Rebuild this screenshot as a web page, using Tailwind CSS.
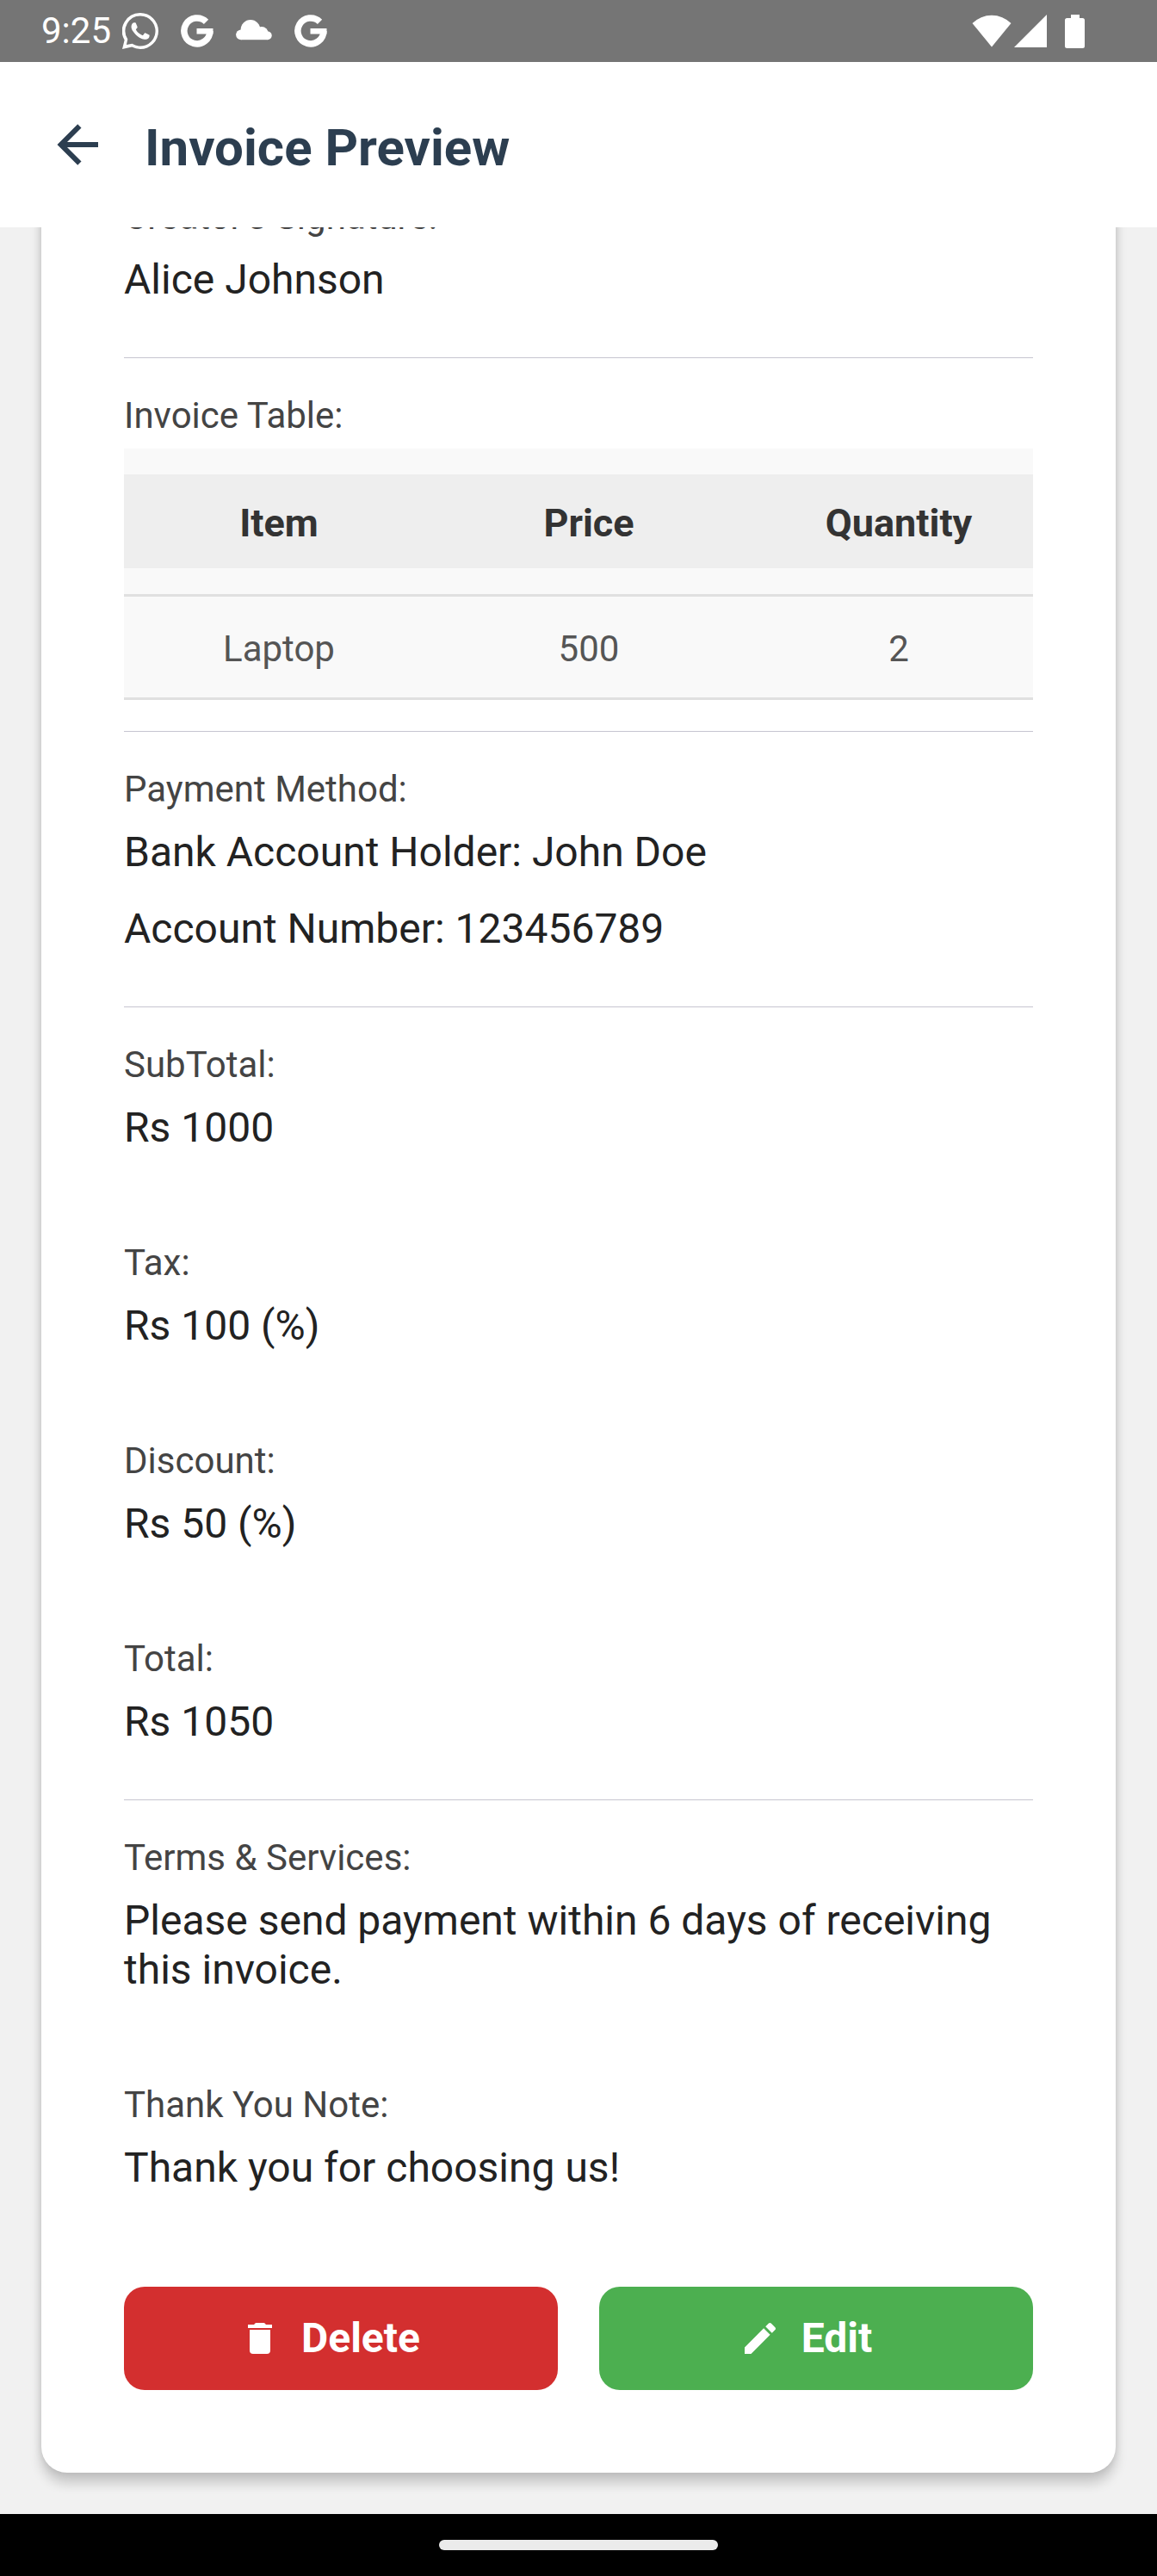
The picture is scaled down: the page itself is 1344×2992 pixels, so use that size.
<!DOCTYPE html>
<html lang="en">
<head>
<meta charset="utf-8">
<title>Invoice Preview</title>
<script src="https://cdn.jsdelivr.net/npm/@tailwindcss/browser@4"></script>
</head>
<body class="font-['Roboto',sans-serif] bg-[#f1f1f1]">
<div class="flex h-[2992px] w-[1344px] flex-col overflow-hidden bg-[#f1f1f1]">

  <!-- Status bar -->
  <div class="flex h-[72px] shrink-0 items-center bg-[#757575] pl-12 pr-[84px] text-white">
    <span class="w-[94px] text-[42px] leading-[72px]">9:25</span>
    <svg class="h-[42px] w-[42px]" viewBox="0 0 24 24" fill="#fff"><path d="M17.472 14.382c-.297-.149-1.758-.867-2.03-.967-.273-.099-.471-.148-.67.15-.197.297-.767.966-.94 1.164-.173.199-.347.223-.644.075-.297-.15-1.255-.463-2.39-1.475-.883-.788-1.48-1.761-1.653-2.059-.173-.297-.018-.458.13-.606.134-.133.298-.347.446-.52.149-.174.198-.298.298-.497.099-.198.05-.371-.025-.52-.075-.149-.669-1.612-.916-2.207-.242-.579-.487-.5-.669-.51-.173-.008-.371-.01-.57-.01-.198 0-.52.074-.792.372-.272.297-1.04 1.016-1.04 2.479 0 1.462 1.065 2.875 1.213 3.074.149.198 2.096 3.2 5.077 4.487.709.306 1.262.489 1.694.625.712.227 1.36.195 1.871.118.571-.085 1.758-.719 2.006-1.413.248-.694.248-1.289.173-1.413-.074-.124-.272-.198-.57-.347z"/><path fill-rule="evenodd" d="M12 0a12 12 0 0 1 0 24a12 12 0 0 1-5.6-1.4L0 24l1.5-6A12 12 0 0 1 12 0zM12 2a10 10 0 0 0-8.400 15.400L2.800 21.200L6.600 20.400A10 10 0 1 0 12 2z"/></svg>
    <svg class="ml-[26px] h-[38px] w-[38px]" viewBox="0 0 38 38"><path d="M29.500 8.300A15 15 0 1 0 33.900 19" fill="none" stroke="#fff" stroke-width="7.500"/><path d="M18.500 16H37.500V22.500H18.500z" fill="#fff"/></svg>
    <svg class="ml-[26px] h-[42px] w-[42px]" viewBox="0 0 42 42" fill="#fff"><circle cx="6" cy="25.300" r="5.900"/><circle cx="17" cy="19.500" r="11.400"/><circle cx="30" cy="23.500" r="7.600"/><circle cx="36.800" cy="26.300" r="4.900"/><path d="M6 22H36.800V31.200H6z"/></svg>
    <svg class="ml-[26px] h-[38px] w-[38px]" viewBox="0 0 38 38"><path d="M29.500 8.300A15 15 0 1 0 33.900 19" fill="none" stroke="#fff" stroke-width="7.500"/><path d="M18.500 16H37.500V22.500H18.500z" fill="#fff"/></svg>
    <div class="grow"></div>
    <svg class="h-[38px] w-[46px]" viewBox="0 0 46 38" fill="#fff"><path d="M.5 10A32 32 0 0 1 45.500 10L23 37.500z"/></svg>
    <svg class="ml-[3px] h-[38px] w-[38px]" viewBox="0 0 38 38" fill="#fff"><path d="M38 0V38H0z"/></svg>
    <svg class="ml-[21px] h-[39px] w-[23px]" viewBox="0 0 23 39" fill="#fff"><path d="M7 0H17V4H20.500A2.500 2.500 0 0 1 23 6.500V36.500A2.500 2.500 0 0 1 20.500 39H2.500A2.500 2.500 0 0 1 0 36.500V6.500A2.500 2.500 0 0 1 2.500 4H7z"/></svg>
  </div>

  <!-- App bar -->
  <header class="z-10 flex h-[192px] shrink-0 items-center bg-white pl-[54px]">
    <svg class="h-[72px] w-[72px]" viewBox="0 0 24 24" fill="#2c3e50"><path d="M20 11v2H8l5.500 5.500-1.420 1.420L4.160 12l7.920-7.920L13.500 5.500 8 11z"/></svg>
    <h1 class="ml-[42px] pt-2 text-[60px] font-bold leading-[72px] text-[#2c3e50]">Invoice Preview</h1>
  </header>

  <!-- Scrolled content -->
  <main class="flex h-[2656px] shrink-0 flex-col justify-end overflow-hidden px-12 pb-12">
    <section class="shrink-0 rounded-b-[30px] bg-white px-24 pb-24 shadow-[0_12px_14px_rgba(0,0,0,0.18),0_0_8px_rgba(0,0,0,0.1)]">
      <p class="text-[42px] leading-[50px] text-[#444]">Creator's Signature:</p>
      <p class="mt-[19px] text-[48px] leading-[57px] text-[#222]">Alice Johnson</p>
      <hr class="mt-[62px] border-0 border-t border-[#c6c5d0]">

      <p class="mt-[42px] text-[42px] leading-[50px] text-[#444]">Invoice Table:</p>
      <div class="mt-[13px] bg-[#f9f9f9] pt-[30px]">
        <div class="grid h-[109px] grid-cols-[repeat(3,360px)] bg-[#eee] pt-[2px] text-center text-[45px] font-bold leading-[109px] text-[#333]">
          <span>Item</span><span>Price</span><span>Quantity</span>
        </div>
        <div class="mt-[30px] grid h-[123px] grid-cols-[repeat(3,360px)] border-y-3 border-[#e0e0e0] pt-[2px] text-center text-[42px] leading-[117px] text-[#555]">
          <span>Laptop</span><span>500</span><span>2</span>
        </div>
      </div>
      <hr class="mt-[36px] border-0 border-t border-[#c6c5d0]">

      <p class="mt-[42px] text-[42px] leading-[50px] text-[#444]">Payment Method:</p>
      <p class="mt-[19px] text-[48px] leading-[57px] text-[#222]">Bank Account Holder: John Doe</p>
      <p class="mt-8 text-[48px] leading-[57px] text-[#222]">Account Number: 123456789</p>
      <hr class="mt-[62px] border-0 border-t border-[#c6c5d0]">

      <p class="mt-[42px] text-[42px] leading-[50px] text-[#444]">SubTotal:</p>
      <p class="mt-[19px] text-[48px] leading-[57px] text-[#222]">Rs 1000</p>
      <p class="mt-[104px] text-[42px] leading-[50px] text-[#444]">Tax:</p>
      <p class="mt-[19px] text-[48px] leading-[57px] text-[#222]">Rs 100 (%)</p>
      <p class="mt-[104px] text-[42px] leading-[50px] text-[#444]">Discount:</p>
      <p class="mt-[19px] text-[48px] leading-[57px] text-[#222]">Rs 50 (%)</p>
      <p class="mt-[104px] text-[42px] leading-[50px] text-[#444]">Total:</p>
      <p class="mt-[19px] text-[48px] leading-[57px] text-[#222]">Rs 1050</p>
      <hr class="mt-[62px] border-0 border-t border-[#c6c5d0]">

      <p class="mt-[42px] text-[42px] leading-[50px] text-[#444]">Terms &amp; Services:</p>
      <p class="mt-[19px] text-[48px] leading-[57px] text-[#222]">Please send payment within 6 days of receiving this invoice.</p>
      <p class="mt-[104px] text-[42px] leading-[50px] text-[#444]">Thank You Note:</p>
      <p class="mt-[19px] text-[48px] leading-[57px] text-[#222]">Thank you for choosing us!</p>

      <div class="mt-[110px] grid grid-cols-2 gap-12 text-[48px] font-bold text-white">
        <button class="flex h-[120px] items-center justify-center gap-6 rounded-3xl bg-[#d32f2f] pr-[26px]">
          <svg class="h-12 w-12" viewBox="0 0 24 24" fill="#fff"><path d="M19 4h-3.500l-1-1h-5l-1 1H5v2h14M6 19a2 2 0 0 0 2 2h8a2 2 0 0 0 2-2V7H6z"/></svg>
          <span class="pb-px leading-[57px]">Delete</span>
        </button>
        <button class="flex h-[120px] items-center justify-center gap-6 rounded-3xl bg-[#4caf50] pr-6">
          <svg class="h-12 w-12" viewBox="0 0 24 24" fill="#fff"><path d="M20.710 7.040c.39-.39.39-1.040 0-1.410l-2.340-2.340c-.37-.39-1.020-.39-1.410 0l-1.840 1.830 3.750 3.750M3 17.250V21h3.750L17.810 9.930l-3.750-3.750z"/></svg>
          <span class="pb-px leading-[57px]">Edit</span>
        </button>
      </div>
    </section>
  </main>

  <!-- Gesture navigation -->
  <div class="z-10 flex h-[72px] shrink-0 items-center justify-center bg-black">
    <div class="h-3 w-[324px] rounded-md bg-[#ebebeb]"></div>
  </div>
</div>
</body>
</html>
